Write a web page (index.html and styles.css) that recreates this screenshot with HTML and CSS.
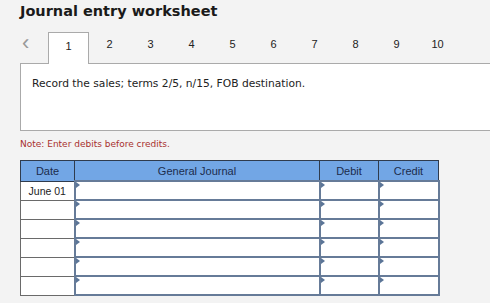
FILE: index.html
```html
<!DOCTYPE html>
<html lang="en">

<head>
    <meta charset="UTF-8">
    <title>Journal entry worksheet</title>
    <link rel="stylesheet" href="styles.css">
</head>

<body>
    <h2 class="title">Journal entry worksheet</h2>

    <div class="tabs">
        <span class="prev">&lsaquo;</span>
        <span class="tab active">1</span>
        <span class="tab">2</span>
        <span class="tab">3</span>
        <span class="tab">4</span>
        <span class="tab">5</span>
        <span class="tab">6</span>
        <span class="tab">7</span>
        <span class="tab">8</span>
        <span class="tab">9</span>
        <span class="tab">10</span>
    </div>

    <div class="panel">
        <p>Record the sales; terms 2/5, n/15, FOB destination.</p>
    </div>

    <p class="note">Note: Enter debits before credits.</p>

    <table class="journal">
        <thead>
            <tr>
                <th class="c-date">Date</th>
                <th class="c-gj">General Journal</th>
                <th class="c-debit">Debit</th>
                <th class="c-credit">Credit</th>
            </tr>
        </thead>
        <tbody>
            <tr>
                <td class="date">June 01</td>
                <td class="entry"></td>
                <td class="entry"></td>
                <td class="entry"></td>
            </tr>
            <tr>
                <td class="date"></td>
                <td class="entry"></td>
                <td class="entry"></td>
                <td class="entry"></td>
            </tr>
            <tr>
                <td class="date"></td>
                <td class="entry"></td>
                <td class="entry"></td>
                <td class="entry"></td>
            </tr>
            <tr>
                <td class="date"></td>
                <td class="entry"></td>
                <td class="entry"></td>
                <td class="entry"></td>
            </tr>
            <tr>
                <td class="date"></td>
                <td class="entry"></td>
                <td class="entry"></td>
                <td class="entry"></td>
            </tr>
            <tr>
                <td class="date"></td>
                <td class="entry"></td>
                <td class="entry"></td>
                <td class="entry"></td>
            </tr>
        </tbody>
    </table>
</body>

</html>
```

FILE: styles.css
```css
body {
    background-color: #f3f3f3;
    margin: 0;
    padding: 0;
    font-family: "DejaVu Sans", Verdana, sans-serif;
    color: #222;
    overflow: hidden;
}

.title {
    margin: 0;
    padding: 3px 0 0 20px;
    font-size: 14.5px;
    font-weight: bold;
    color: #1a1a1a;
    height: 29px;
    box-sizing: border-box;
}

.tabs {
    display: flex;
    align-items: stretch;
    height: 31px;
    padding-left: 20px;
    margin-top: 3px;
}

.prev {
    width: 28px;
    font-family: "Liberation Sans", Arial, sans-serif;
    font-size: 22px;
    color: #999;
    line-height: 22px;
    padding-left: 2px;
    box-sizing: border-box;
}

.tab {
    width: 41px;
    text-align: center;
    font-family: "Liberation Sans", Arial, sans-serif;
    font-size: 11px;
    line-height: 24px;
    color: #222;
}

.tab.active {
    background-color: #fff;
    border: 1px solid #aaa;
    border-bottom: none;
    position: relative;
    z-index: 1;
    height: 32px;
    line-height: 22px;
    padding-top: 2px;
    box-sizing: border-box;
}

.panel {
    margin-left: 20px;
    width: 480px;
    height: 68px;
    background-color: #fff;
    border: 1px solid #aaa;
    box-sizing: border-box;
}

.panel p {
    margin: 0;
    padding: 13px 11px;
    font-size: 10.7px;
    color: #222;
}

.note {
    margin: 8px 0 0 20px;
    font-size: 9px;
    color: #a8302e;
    height: 15px;
}

.journal {
    margin: 6px 0 0 20px;
    border-collapse: collapse;
    width: 414px;
    table-layout: fixed;
    font-family: "Liberation Sans", Arial, sans-serif;
}

.journal th {
    background-color: #72a6e5;
    color: #1c2c4c;
    font-size: 11px;
    font-weight: normal;
    height: 19px;
    padding: 0;
    border: 1px solid #2f3b4d;
}

.c-date {
    width: 53px;
}

.c-gj {
    width: 244px;
}

.c-debit {
    width: 58px;
}

.c-credit {
    width: 59px;
}

.journal td {
    height: 17px;
    padding: 0;
    background-color: #fff;
}

.journal td.date {
    border: 1px solid #6a6a6a;
    text-align: center;
    font-size: 10.5px;
    color: #222;
}

.journal td.entry {
    border: 2px solid #667b98;
    position: relative;
}

.journal td.entry::before {
    content: "";
    position: absolute;
    left: 0;
    top: 0;
    border-left: 4px solid #5b7597;
    border-top: 3px solid transparent;
    border-bottom: 3px solid transparent;
}
```
